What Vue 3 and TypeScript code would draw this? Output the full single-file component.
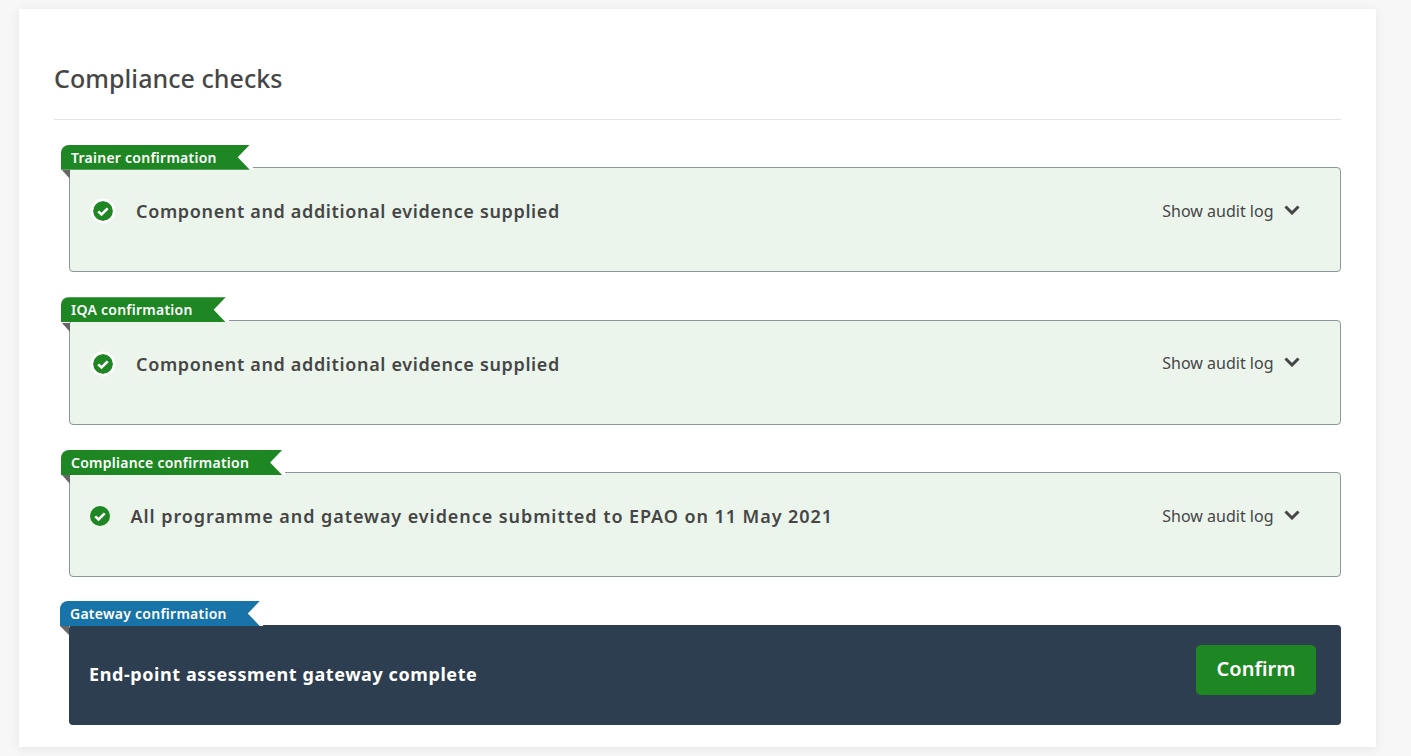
<script setup lang="ts">
interface Check {
  label: string
  text: string
  ring: boolean
}

const checks: Check[] = [
  { label: 'Trainer confirmation', text: 'Component and additional evidence supplied', ring: true },
  { label: 'IQA confirmation', text: 'Component and additional evidence supplied', ring: true },
  { label: 'Compliance confirmation', text: 'All programme and gateway evidence submitted to EPAO on 11 May 2021', ring: false },
]
</script>

<template>
  <main class="page">
    <section class="card">
      <h2 class="card__title">Compliance checks</h2>

      <div class="checks">
        <div v-for="check in checks" :key="check.label" class="check">
          <span class="tag"><span class="tag__inner">{{ check.label }}</span></span>
          <div class="check__status" :class="{ 'check__status--plain': !check.ring }">
            <svg class="check__icon" :class="{ 'check__icon--ring': check.ring }" viewBox="0 0 20 20" width="20" height="20">
              <circle cx="10" cy="10" r="10" fill="#1e8723" />
              <path d="M5.2 10.4l3.3 3.1 6.2-6.2" fill="none" stroke="#fff" stroke-width="2.6" />
            </svg>
            <span class="check__text">{{ check.text }}</span>
          </div>
          <button class="audit" type="button">
            <span>Show audit log</span>
            <svg viewBox="0 0 16 10" width="16" height="10">
              <path d="M1.5 1.5L8 8l6.5-6.5" fill="none" stroke="#464646" stroke-width="3" />
            </svg>
          </button>
        </div>

        <div class="gateway">
          <span class="tag tag--blue"><span class="tag__inner">Gateway confirmation</span></span>
          <strong class="gateway__text">End-point assessment gateway complete</strong>
          <button class="gateway__btn" type="button">Confirm</button>
        </div>
      </div>
    </section>
  </main>
</template>

<style>
html,
body {
  margin: 0;
  background: #f7f7f7;
}
</style>

<style scoped>
.page {
  height: 756px;
  box-sizing: border-box;
  padding: 9px 35px 9px 19px;
  overflow: hidden;
  font-family: "Noto Sans", "Open Sans", sans-serif;
  color: #464646;
}

.card {
  height: 738px;
  box-sizing: border-box;
  padding: 0 35px;
  background: #fff;
  box-shadow: 0 2px 10px rgba(0, 0, 0, 0.08);
}

.card__title {
  margin: 0;
  height: 111px;
  box-sizing: border-box;
  padding-top: 51px;
  font-size: 25px;
  line-height: 36px;
  font-weight: 500;
  letter-spacing: 0.05px;
  border-bottom: 1px solid #e4e4e4;
}

.checks {
  padding: 47px 0 0 15px;
}

.check {
  position: relative;
  height: 105px;
  box-sizing: border-box;
  margin-bottom: 47.67px;
  padding: 0 40.5px 0 23px;
  display: flex;
  justify-content: space-between;
  background: #ebf5ec;
  border: 1px solid #8a969c;
  border-radius: 4px;
}

.check__status {
  display: flex;
  align-items: center;
  gap: 23px;
  height: 86px;
}

.check__status--plain {
  margin-left: -3px;
  gap: 20.5px;
}

.check__icon {
  flex: none;
}

.check__icon--ring {
  border-radius: 50%;
  box-shadow: 0 0 0 2.5px #fff;
}

.check__text {
  font-size: 18px;
  font-weight: 600;
  line-height: 24px;
  letter-spacing: 0.65px;
}

.check__status--plain .check__text {
  letter-spacing: 0.93px;
}

.audit {
  display: flex;
  align-items: center;
  gap: 10px;
  height: 85px;
  padding: 0;
  border: none;
  background: none;
  color: #464646;
  font: inherit;
  font-size: 16px;
}

.audit svg {
  margin-top: -2px;
}

.tag {
  position: absolute;
  left: -9px;
  top: -23.3px;
  height: 25px;
  padding-right: 3px;
  background: #fff;
}

.tag__inner {
  display: block;
  height: 25px;
  box-sizing: border-box;
  padding: 0 33px 0 10px;
  font-size: 14px;
  font-weight: 600;
  line-height: 25px;
  letter-spacing: 0.25px;
  color: #fff;
  background: #1e8723;
  border-radius: 8px 0 0 0;
  clip-path: polygon(0 0, 100% 0, calc(100% - 12px) 50%, 100% 100%, 0 100%);
}

/* the little fold under the ribbon */
.check::before,
.gateway::before {
  content: "";
  position: absolute;
  left: -8px;
  top: 2px;
  border-top: 9px solid #666;
  border-left: 8px solid transparent;
}

.gateway {
  position: relative;
  height: 100px;
  box-sizing: border-box;
  padding: 0 25px 10px 20px;
  display: flex;
  align-items: center;
  justify-content: space-between;
  background: #2d3e50;
  border-radius: 4px;
}

.gateway::before {
  left: -9px;
  top: 1px;
  border-left-width: 9px;
}

.tag--blue {
  top: -24px;
}

.tag--blue .tag__inner {
  background: #1873a8;
}

.gateway__text {
  padding-top: 8px;
  font-size: 18px;
  font-weight: 700;
  letter-spacing: 0.58px;
  color: #fff;
}

.gateway__btn {
  width: 120px;
  height: 50px;
  padding-bottom: 4px;
  border: none;
  border-radius: 5px;
  background: #1e8723;
  color: #fff;
  font: inherit;
  font-size: 20px;
  font-weight: 600;
}
</style>
